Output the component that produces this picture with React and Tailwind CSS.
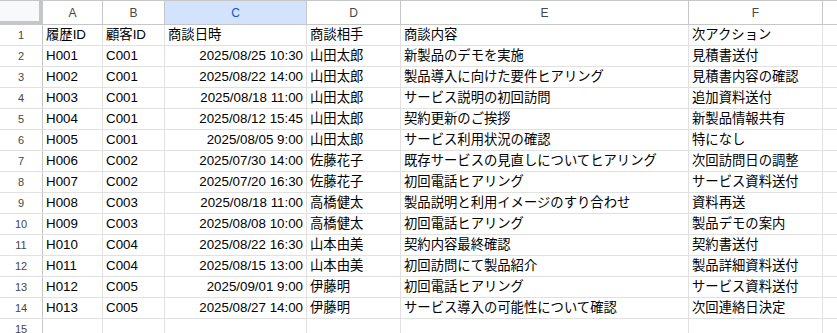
import React from 'react'

const cols = [
  { key: 'A', w: 'w-[60px]' },
  { key: 'B', w: 'w-[62px]' },
  { key: 'C', w: 'w-[142px]', right: true },
  { key: 'D', w: 'w-[94px]' },
  { key: 'E', w: 'w-[288px]' },
  { key: 'F', w: 'w-[134px]' },
]

const rows = [
  ['履歴ID', '顧客ID', '商談日時', '商談相手', '商談内容', '次アクション'],
  ['H001', 'C001', '2025/08/25 10:30', '山田太郎', '新製品のデモを実施', '見積書送付'],
  ['H002', 'C001', '2025/08/22 14:00', '山田太郎', '製品導入に向けた要件ヒアリング', '見積書内容の確認'],
  ['H003', 'C001', '2025/08/18 11:00', '山田太郎', 'サービス説明の初回訪問', '追加資料送付'],
  ['H004', 'C001', '2025/08/12 15:45', '山田太郎', '契約更新のご挨拶', '新製品情報共有'],
  ['H005', 'C001', '2025/08/05 9:00', '山田太郎', 'サービス利用状況の確認', '特になし'],
  ['H006', 'C002', '2025/07/30 14:00', '佐藤花子', '既存サービスの見直しについてヒアリング', '次回訪問日の調整'],
  ['H007', 'C002', '2025/07/20 16:30', '佐藤花子', '初回電話ヒアリング', 'サービス資料送付'],
  ['H008', 'C003', '2025/08/18 11:00', '高橋健太', '製品説明と利用イメージのすり合わせ', '資料再送'],
  ['H009', 'C003', '2025/08/08 10:00', '高橋健太', '初回電話ヒアリング', '製品デモの案内'],
  ['H010', 'C004', '2025/08/22 16:30', '山本由美', '契約内容最終確認', '契約書送付'],
  ['H011', 'C004', '2025/08/15 13:00', '山本由美', '初回訪問にて製品紹介', '製品詳細資料送付'],
  ['H012', 'C005', '2025/09/01 9:00', '伊藤明', '初回電話ヒアリング', 'サービス資料送付'],
  ['H013', 'C005', '2025/08/27 14:00', '伊藤明', 'サービス導入の可能性について確認', '次回連絡日決定'],
  ['', '', '', '', '', ''],
]

const App = () => {
  return (
    <div
      className="w-[837px] h-[333px] overflow-hidden bg-white text-black"
      style={{ fontFamily: '"Liberation Sans", Arial, "Noto Sans CJK JP", sans-serif' }}
    >
      {/* column letters */}
      <div className="flex h-[25px] border-t border-[#c4c7c5] border-b border-b-[#c4c7c5]">
        <div className="w-[43px] shrink-0 bg-[#f8f9fa] border-r-4 border-[#c4c7c5] border-b-4 -mb-px" />
        {cols.map((c) => (
          <div
            key={c.key}
            className={`${c.w} shrink-0 flex items-center justify-center border-r border-[#c4c7c5] text-[12px] ${
              c.key === 'C' ? 'bg-[#d3e3fd] text-[#0b57d0]' : 'bg-white text-[#444746]'
            }`}
          >
            {c.key}
          </div>
        ))}
        <div className="flex-1 bg-white" />
      </div>

      {rows.map((r, i) => (
        <div key={i} className="flex h-[21px] border-b border-[#e1e1e1]">
          <div className="w-[43px] shrink-0 flex items-center justify-center bg-white border-r border-[#c4c7c5] text-[11px] text-[#444746]">
            {i + 1}
          </div>
          {cols.map((c, j) => (
            <div
              key={c.key}
              className={`${c.w} shrink-0 flex items-end pb-[2px] px-[3px] border-r border-[#e1e1e1] text-[13.33px] leading-[16px] whitespace-nowrap overflow-hidden ${
                c.right && i > 0 ? 'justify-end' : 'justify-start'
              }`}
            >
              {r[j]}
            </div>
          ))}
          <div className="flex-1" />
        </div>
      ))}
    </div>
  )
}

export default App
